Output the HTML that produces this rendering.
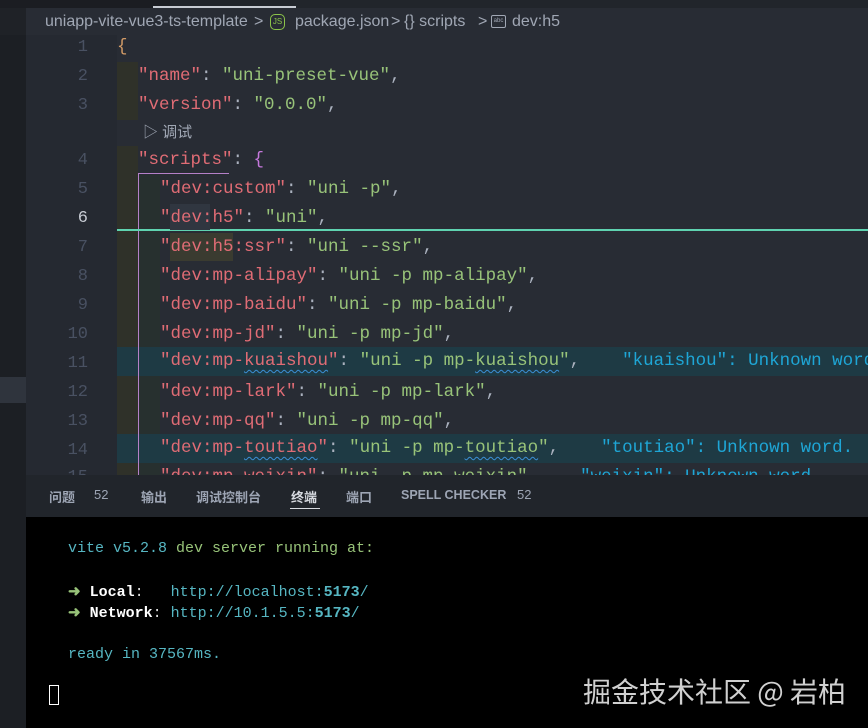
<!DOCTYPE html>
<html><head><meta charset="utf-8"><style>
*{margin:0;padding:0;box-sizing:border-box}
body{width:868px;height:728px;overflow:hidden;background:#282c34;position:relative;font-family:"Liberation Mono",monospace}
.abs{position:absolute}
.ln{position:absolute;left:26px;width:62px;text-align:right;color:#495162;font-size:17px;font-family:"Liberation Mono",monospace}
.code{position:absolute;white-space:pre;font-size:17.5px;color:#abb2bf;line-height:29px;height:29px}
.k{color:#e06c75}.s{color:#98c379}.p{color:#abb2bf}
.err{color:#1ea6d6}
.sq{text-decoration:underline wavy #3b8fd6;text-underline-offset:4px;text-decoration-thickness:1px}
.tab{position:absolute;top:487px;font-family:"Liberation Sans","Noto Sans CJK SC",sans-serif;font-size:13px;color:#9da5b4;font-weight:bold}
.t{position:absolute;left:68px;font-size:15px;white-space:pre;color:#56b6c2;font-family:"Liberation Mono",monospace}
.bc{position:absolute;top:8px;line-height:27px;font-family:'Liberation Sans','Noto Sans CJK SC',sans-serif;font-size:16px;color:#a0a7b4;white-space:pre}
</style></head><body>
<div class="abs" style="left:0;top:0;width:868px;height:8px;background:#21252b"></div>
<div class="abs" style="left:0;top:0;width:170px;height:8px;background:#1b1d22"></div>
<div class="abs" style="left:153px;top:6px;width:143px;height:2px;background:#c8ccd4"></div>
<div class="abs" style="left:0;top:8px;width:26px;height:720px;background:#1f2227"></div>
<div class="abs" style="left:0;top:35px;width:26px;height:693px;background:#1c1f24"></div>
<div class="abs" style="left:0;top:377px;width:26px;height:26px;background:#2f343d"></div>
<div class="abs" style="left:26px;top:35px;width:91px;height:440px;background:#252931"></div>
<div class="abs" style="left:26px;top:8px;width:842px;height:27px;background:#282c34"></div>
<div class="bc" style="left:45px">uniapp-vite-vue3-ts-template</div>
<div class="bc" style="left:254px">&gt;</div>
<div class="abs" style="left:270px;top:14px;width:15px;height:16px;border:1.5px solid #8bc34a;border-radius:5px;color:#8bc34a;font-family:'Liberation Sans',sans-serif;font-size:8px;line-height:13px;text-align:center">JS</div>
<div class="bc" style="left:295px">package.json</div>
<div class="bc" style="left:391px">&gt;</div>
<div class="bc" style="left:404px">{} scripts</div>
<div class="bc" style="left:478px">&gt;</div>
<div class="abs" style="left:491px;top:15px;width:15px;height:13px;border:1.5px solid #a0a7b4;border-radius:2px;font-family:'Liberation Sans',sans-serif;font-size:6px;line-height:10px;text-align:center;color:#a0a7b4">abc</div>
<div class="bc" style="left:512px">dev:h5</div>

<div class="abs" style="left:117px;top:62px;width:21px;height:58px;background:#2f3129"></div>
<div class="abs" style="left:117px;top:146px;width:21px;height:329px;background:#2f3129"></div>
<div class="abs" style="left:138px;top:175px;width:22px;height:300px;background:#27302f"></div>
<div class="abs" style="left:117px;top:347px;width:751px;height:29px;background:#1e3a44"></div>
<div class="abs" style="left:117px;top:434px;width:751px;height:29px;background:#1e3a44"></div>
<div class="abs" style="left:138px;top:173px;width:91px;height:1px;background:#b580c8"></div>
<div class="abs" style="left:138px;top:173px;width:1px;height:302px;background:#b580c8"></div>
<div class="abs" style="left:117px;top:229px;width:751px;height:2px;background:#5fd3b0"></div>
<div class="abs" style="left:170px;top:233px;width:63px;height:28px;background:#3a3b30"></div>
<div class="abs" style="left:170px;top:204px;width:40px;height:26px;background:#303640"></div>

<div class="ln" style="top:38px">1</div><div class="code" style="left:117px;top:33px"><span style="color:#d19a66">{</span></div>
<div class="ln" style="top:67px">2</div><div class="code" style="left:138px;top:62px"><span class="k">"name"</span>: <span class="s">"uni-preset-vue"</span>,</div>
<div class="ln" style="top:96px">3</div><div class="code" style="left:138px;top:91px"><span class="k">"version"</span>: <span class="s">"0.0.0"</span>,</div>
<div class="abs" style="left:143px;top:121px;font-family:'Liberation Sans','Noto Sans CJK SC',sans-serif;font-size:15px;color:#a0a7b4">▷ 调试</div>
<div class="ln" style="top:151px">4</div><div class="code" style="left:138px;top:146px"><span class="k">"scripts"</span>: <span style="color:#c678dd">{</span></div>
<div class="ln" style="top:180px">5</div><div class="code" style="left:160px;top:175px"><span class="k">"dev:custom"</span>: <span class="s">"uni -p"</span>,</div>
<div class="ln" style="top:209px;color:#c8ccd4">6</div><div class="code" style="left:160px;top:204px"><span class="k">"dev:h5"</span>: <span class="s">"uni"</span>,</div>
<div class="ln" style="top:238px">7</div><div class="code" style="left:160px;top:233px"><span class="k">"dev:h5:ssr"</span>: <span class="s">"uni --ssr"</span>,</div>
<div class="ln" style="top:267px">8</div><div class="code" style="left:160px;top:262px"><span class="k">"dev:mp-alipay"</span>: <span class="s">"uni -p mp-alipay"</span>,</div>
<div class="ln" style="top:296px">9</div><div class="code" style="left:160px;top:291px"><span class="k">"dev:mp-baidu"</span>: <span class="s">"uni -p mp-baidu"</span>,</div>
<div class="ln" style="top:325px">10</div><div class="code" style="left:160px;top:320px"><span class="k">"dev:mp-jd"</span>: <span class="s">"uni -p mp-jd"</span>,</div>
<div class="ln" style="top:354px">11</div><div class="code" style="left:160px;top:347px"><span class="k">"dev:mp-<span class="sq">kuaishou</span>"</span>: <span class="s">"uni -p mp-<span class="sq">kuaishou</span>"</span>,    <span class="err">"kuaishou": Unknown word.</span></div>
<div class="ln" style="top:383px">12</div><div class="code" style="left:160px;top:378px"><span class="k">"dev:mp-lark"</span>: <span class="s">"uni -p mp-lark"</span>,</div>
<div class="ln" style="top:412px">13</div><div class="code" style="left:160px;top:407px"><span class="k">"dev:mp-qq"</span>: <span class="s">"uni -p mp-qq"</span>,</div>
<div class="ln" style="top:441px">14</div><div class="code" style="left:160px;top:434px"><span class="k">"dev:mp-<span class="sq">toutiao</span>"</span>: <span class="s">"uni -p mp-<span class="sq">toutiao</span>"</span>,    <span class="err">"toutiao": Unknown word.</span></div>
<div class="ln" style="top:468px">15</div><div class="code" style="left:160px;top:463px"><span class="k">"dev:mp-weixin"</span>: <span class="s">"uni -p mp-weixin"</span>,    <span class="err">"weixin": Unknown word.</span></div>

<div class="abs" style="left:26px;top:475px;width:842px;height:42px;background:#21252b"></div>
<div class="tab" style="left:49px">问题</div><div class="tab" style="left:94px;font-weight:normal">52</div>
<div class="tab" style="left:141px">输出</div>
<div class="tab" style="left:196px">调试控制台</div>
<div class="tab" style="left:291px;color:#d7dae0">终端</div>
<div class="abs" style="left:290px;top:508px;width:30px;height:1px;background:#d7dae0"></div>
<div class="tab" style="left:346px">端口</div>
<div class="tab" style="left:401px;font-size:12.5px;top:488px">SPELL CHECKER</div><div class="tab" style="left:517px;font-weight:normal">52</div>
<div class="abs" style="left:26px;top:517px;width:842px;height:211px;background:#000"></div>
<div class="t" style="top:540px">vite v5.2.8 <span style="color:#98c379">dev server running at:</span></div>
<div class="t" style="top:582px"><span style="color:#98c379;font-weight:bold">➜</span> <b style="color:#fff">Local</b><span style="color:#ddd">:</span>   http://localhost:<b>5173</b>/</div>
<div class="t" style="top:603px"><span style="color:#98c379;font-weight:bold">➜</span> <b style="color:#fff">Network</b><span style="color:#ddd">:</span> http://10.1.5.5:<b>5173</b>/</div>
<div class="t" style="top:646px">ready in 37567ms.</div>
<div class="abs" style="left:49px;top:685px;width:10px;height:20px;border:1.5px solid #fff"></div>
<div class="abs" style="left:583px;top:671px;font-family:'Noto Sans CJK SC',sans-serif;font-size:28px;color:#d0d0d0;white-space:pre">掘金技术社区 @ 岩柏</div>
</body></html>
